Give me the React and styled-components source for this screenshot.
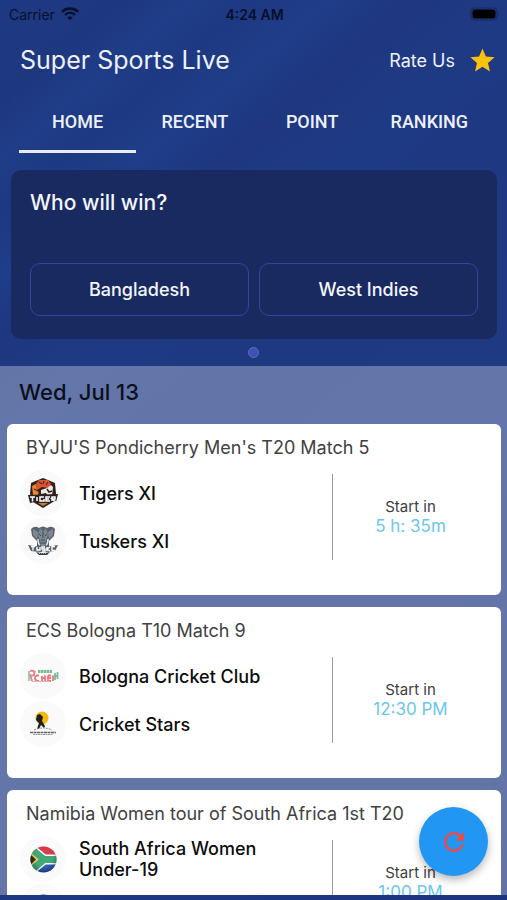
import React, { useState } from "react";
import styled, { createGlobalStyle, css } from "styled-components";

const GlobalStyle = createGlobalStyle`
  *, *::before, *::after { box-sizing: border-box; }
  html, body { margin: 0; padding: 0; }
  body, button { font-family: "Inter", "Liberation Sans", sans-serif; }
  h1, h2, h3, p, ul { margin: 0; padding: 0; font-weight: 400; }
`;

const Screen = styled.div`
  display: flex;
  flex-direction: column;
  height: 100vh;
  padding-bottom: 5px;
  overflow: hidden;
  background:
    linear-gradient(140deg,
      #1e3983 0%, #1e3880 8%, #1f3d88 12%, #1e3983 16%, #1f3d89 21%,
      #1e377f 26%, #1f3a84 33%, #1e3882 42%, #1f3983 60%, #1d3581 100%);
`;

const StatusBar = styled.div`
  display: grid;
  grid-template-columns: 1fr auto 1fr;
  align-items: center;
  height: 28px;
  padding: 0 7px 0 9px;
  color: #071028;
  font-size: 14px;
`;

const Carrier = styled.span`
  display: flex;
  align-items: center;
  gap: 6px;
`;

const Clock = styled.span`
  font-weight: 600;
`;

const BatterySlot = styled.span`
  display: flex;
  justify-content: flex-end;
`;

const AppBar = styled.header`
  display: flex;
  align-items: center;
  justify-content: space-between;
  height: 64px;
  padding: 0 10px 0 20px;
  color: #edf1fb;
`;

const AppTitle = styled.h1`
  font-size: 25px;
  line-height: 32px;
`;

const RateButton = styled.button`
  display: flex;
  align-items: center;
  gap: 13px;
  padding: 0;
  border: 0;
  background: none;
  color: inherit;
  font-size: 18px;
  cursor: pointer;
`;

const Tabs = styled.nav`
  display: grid;
  grid-template-columns: repeat(4, 1fr);
  margin: 0 19px;
`;

const Tab = styled.button`
  height: 61px;
  padding: 0;
  border: 0;
  border-bottom: 3px solid ${(p) => (p.$active ? "#e8ecf8" : "transparent")};
  background: none;
  color: #edf1fb;
  font-family: "Roboto", "Inter", sans-serif;
  font-size: 18px;
  font-weight: 500;
  cursor: pointer;
`;

const Poll = styled.section`
  margin: 17px 10px 0 11px;
  padding: 20px 19px 23px;
  border-radius: 10px;
  background: #192a61;
  color: #f4f6fd;
`;

const Question = styled.h2`
  font-size: 21px;
  font-weight: 500;
  line-height: 26px;
`;

const Options = styled.div`
  display: grid;
  grid-template-columns: 1fr 1fr;
  gap: 10px;
  margin-top: 47px;
`;

const Option = styled.button`
  height: 53px;
  padding: 0;
  border: 1px solid #3843a0;
  border-radius: 10px;
  background: ${(p) => (p.$chosen ? "#27387a" : "transparent")};
  color: inherit;
  font-size: 18px;
  font-weight: 500;
  cursor: pointer;
`;

const Pager = styled.div`
  display: flex;
  justify-content: center;
  align-items: center;
  height: 27px;
`;

const PagerDot = styled.span`
  width: 11px;
  height: 11px;
  border: 1px solid #5f6cba;
  border-radius: 50%;
  background: #3f51b5;
`;

const Schedule = styled.main`
  flex: 1;
  min-height: 0;
  overflow-y: auto;
  scrollbar-width: none;
  background: rgba(255, 255, 255, 0.31);
`;

const DateHeading = styled.h2`
  padding: 11px 19px 17px;
  color: #0b0f1c;
  font-size: 22px;
  font-weight: 500;
  line-height: 30px;
`;

const MatchList = styled.ul`
  display: flex;
  flex-direction: column;
  gap: 12px;
  padding: 0 6px 12px 7px;
  list-style: none;
`;

const MatchCard = styled.li`
  padding: 12px 13px 31px;
  border-radius: 6px;
  background: #ffffff;
`;

const MatchTitle = styled.h3`
  padding-left: 6px;
  color: #414141;
  font-size: 18px;
  line-height: 24px;
`;

const MatchBody = styled.div`
  display: grid;
  grid-template-columns: 2fr 1fr;
  align-items: center;
  margin-top: 10px;
`;

const Teams = styled.div`
  display: flex;
  flex-direction: column;
  gap: 2px;
`;

const Team = styled.div`
  display: flex;
  align-items: center;
  gap: 13px;
  height: 46px;
  padding-right: 20px;
  color: #0c0c0c;
  font-size: 18px;
  font-weight: 500;
  line-height: 21px;
`;

const LogoDisc = styled.span`
  display: flex;
  flex: none;
  align-items: center;
  justify-content: center;
  width: 46px;
  height: 46px;
  border-radius: 50%;
  background: #fafafa;
`;

const Start = styled.div`
  display: flex;
  flex-direction: column;
  align-items: center;
  justify-content: center;
  height: 86px;
  border-left: 1px solid #9c9c9c;
`;

const StartLabel = styled.p`
  color: #404040;
  font-size: 15px;
  line-height: 19px;
`;

const StartTime = styled.p`
  color: #6cc6ec;
  font-size: 17px;
  line-height: 21px;
`;

const RefreshButton = styled.button`
  position: fixed;
  right: 19px;
  bottom: 24px;
  display: flex;
  align-items: center;
  justify-content: center;
  width: 69px;
  height: 69px;
  padding: 0;
  border: 0;
  border-radius: 50%;
  background: #2196f3;
  color: #f04a45;
  box-shadow: 0 4px 9px rgba(0, 0, 0, 0.28);
  cursor: pointer;
`;

const glyph = css`
  display: block;
  flex: none;
`;

const Svg = styled.svg`
  ${glyph}
`;

function WifiIcon() {
  return (
    <Svg width="18" height="14" viewBox="0 0 18 14" fill="none" stroke="currentColor" aria-hidden="true">
      <path d="M1 4.7C5.5.5 12.5.5 17 4.7" strokeWidth="2.6" />
      <path d="M4 8C6.9 5.2 11.1 5.2 14 8" strokeWidth="2.4" />
      <path d="M9 13.3 6.2 10.5Q9 8.300 11.800 10.500Z" fill="currentColor" stroke="none" />
    </Svg>
  );
}

function BatteryIcon() {
  return (
    <Svg width="30" height="14" viewBox="0 0 30 14" aria-hidden="true">
      <rect x="1" y="1" width="26" height="12" rx="4" fill="none" stroke="#152a63" strokeWidth="1.2" />
      <rect x="2.5" y="2.500" width="23" height="9" rx="2.500" fill="#000" />
      <path d="M28.3 5Q30 7 28.3 9Z" fill="#152a63" />
    </Svg>
  );
}

function StarIcon() {
  return (
    <Svg width="29" height="29" viewBox="0 0 24 24" fill="#fdc20a" aria-hidden="true">
      <path d="M12 17.27 18.18 21l-1.64-7.03L22 9.24l-7.19-.61L12 2 9.19 8.63 2 9.24l5.46 4.73L5.82 21z" />
    </Svg>
  );
}

function RefreshIcon() {
  return (
    <Svg width="30" height="30" viewBox="0 0 24 24" fill="currentColor" aria-hidden="true">
      <path d="M17.65 6.35C16.2 4.9 14.21 4 12 4c-4.42 0-7.99 3.58-7.99 8s3.57 8 7.99 8c3.73 0 6.84-2.55 7.73-6h-2.08c-.82 2.33-3.04 4-5.65 4-3.31 0-6-2.69-6-6s2.69-6 6-6c1.66 0 3.14.69 4.22 1.78L13 11h7V4l-2.35 2.35z" />
    </Svg>
  );
}

function TigersLogo() {
  return (
    <Svg width="32" height="32" viewBox="0 0 32 32" aria-hidden="true">
      <path d="M16 1 21 3 28 6 29 17 26 25 16 31 6 25 3 17 4 6 11 3Z" fill="#30211f" />
      <path d="M9 7 12 3 21 3 24 7 21 11 15 10 10 13Z" fill="#dc5530" />
      <path d="M5 9 9 7 10 13 13 18H6Z" fill="#e9862c" />
      <path d="M12 5 15 7M17 4 16 7M21 5 19 8M7 12 11 14" stroke="#5b2820" strokeWidth="1.2" />
      <path d="M14 13 20 11 24 8 26 10 25 19H21L19 16 14 17Z" fill="#efe9e5" />
      <path d="M20 12 22 15 25 14M11 17 15 18" stroke="#33201e" strokeWidth="1.5" fill="none" />
      <path d="M1 18 31 17 29 25Q16 22 3 26Z" fill="#292323" />
      <path d="M3 20h5M5.500 20v4.500M10 20v4M17 20h-4v4h4v-2M23 20h-4v4h4M19 22h3M25 24v-4h3v2h-3l4 3" fill="none" stroke="#fff" strokeWidth="1.5" />
      <path d="M11 26h10l-5 3Z" fill="#bc852e" />
    </Svg>
  );
}

function TuskersLogo() {
  return (
    <Svg width="32" height="32" viewBox="0 0 32 32" aria-hidden="true">
      <path d="M12 3Q16 0 20 3Q25 0 28 4L27 11 22 16 22 22H10V16L5 11 4 4Q8 0 12 3Z" fill="#59646e" />
      <path d="M6 4 11 7 10 14 6 10ZM26 4 21 7 22 14 26 10Z" fill="#7d8893" />
      <path d="M13 3 16 7 19 3 21 10 18 18 18 23H14V18L11 10Z" fill="#7b8894" />
      <path d="M16 7V13M12 9 14 11M20 9 18 11M14 15h4M14 18h4" stroke="#3c4751" strokeWidth="1" />
      <path d="M11 14Q11 19 13 20M21 14Q21 19 19 20" stroke="#e6eaed" strokeWidth="1.5" fill="none" />
      <path d="M1 20Q16 23 31 20L28 26Q16 28 4 26Z" fill="#59626a" />
      <path d="M4 21.500h4M6 22v3.500M10 22v3h3v-3M18 22h-3v2h3v2h-3M20 22v4M23 22l-3 2 3 2M28 21.500h-3v4h3" fill="none" stroke="#fff" strokeWidth="1.4" />
      <path d="M9 27Q16 29 23 27L20 30H12Z" fill="#343b42" />
      <path d="M12 28.500h8" stroke="#a7adb2" strokeDasharray="1 1" />
    </Svg>
  );
}

function BolognaLogo() {
  return (
    <Svg width="32" height="16" viewBox="0 0 32 16" fill="none" aria-hidden="true">
      <path d="M11 3.500h14" stroke="#74bd95" strokeWidth="3" strokeDasharray="2.500 .5" />
      <path d="M2 3v10" stroke="#7fc29b" strokeWidth="1.500" />
      <path d="M3 3Q9 2 7 7L4 8M3 6l2 7M7 5 8 3" stroke="#ea868d" strokeWidth="2" />
      <path d="M12 7.500Q8 7 8 10T12 13M15 8v5M15 10h3M18 7.500v5.500M21 7.500v5.500M24 7.500h-3M21 10h3M24 13h-3M26 7.500v5.500" stroke="#e97880" strokeWidth="1.800" />
      <path d="M28 5v7M30.500 4v7M27 8h4" stroke="#79bd95" strokeWidth="1.800" />
      <path d="M5 13.500h18" stroke="#f2b2b5" />
    </Svg>
  );
}

function CricketStarsLogo() {
  return (
    <Svg width="30" height="30" viewBox="0 0 30 30" aria-hidden="true">
      <circle cx="14" cy="9" r="6.500" fill="#f7b90d" />
      <path d="M9 6 12 5 15 8 14 12 17 17 16 19 13 16 11 20 9 20 11 14 8 11Z" fill="#1e211d" />
      <path d="M6 21Q15 17 24 21" fill="none" stroke="#888" strokeDasharray="2 1" />
      <path d="M2 23.500h26" stroke="#666" strokeWidth="1.500" strokeDasharray="3 .5" />
      <path d="M5 25.500h20" stroke="#999" strokeDasharray="2 .5" />
    </Svg>
  );
}

function SouthAfricaFlag() {
  return (
    <Svg width="27" height="27" viewBox="0 0 27 27" aria-hidden="true">
      <defs>
        <clipPath id="flag-za">
          <circle cx="13.5" cy="13.5" r="13" />
        </clipPath>
        <radialGradient id="flag-za-gloss" cx=".5" cy=".4" r=".6">
          <stop offset=".5" stopColor="#fff" stopOpacity=".12" />
          <stop offset="1" stopColor="#000" stopOpacity=".3" />
        </radialGradient>
      </defs>
      <g clipPath="url(#flag-za)">
        <path d="M0 0h27v14H0z" fill="#d42033" />
        <path d="M0 14h27v13H0z" fill="#164bad" />
        <path d="M0 2 14 13.500H27M0 25 14 13.500" stroke="#fff" strokeWidth="10" fill="none" />
        <path d="M0 2 14 13.500H27M0 25 14 13.500" stroke="#279d65" strokeWidth="7" fill="none" />
        <path d="M0 6 8.500 13.500 0 21Z" fill="#efbd2a" />
        <path d="M0 8 6 13.500 0 19Z" fill="#111" />
        <circle cx="13.5" cy="13.5" r="13" fill="url(#flag-za-gloss)" />
      </g>
    </Svg>
  );
}

function NamibiaFlag() {
  return (
    <Svg width="27" height="27" viewBox="0 0 27 27" aria-hidden="true">
      <defs>
        <clipPath id="flag-na">
          <circle cx="13.5" cy="13.5" r="13" />
        </clipPath>
      </defs>
      <g clipPath="url(#flag-na)">
        <path d="M0 0h27L0 27z" fill="#1b3b7c" />
        <path d="M27 0v27H0z" fill="#16803f" />
        <path d="M-2 29 29-2" stroke="#fff" strokeWidth="9" />
        <path d="M-2 29 29-2" stroke="#cc2239" strokeWidth="6" />
        <circle cx="8" cy="8" r="3" fill="#ffce2e" />
      </g>
    </Svg>
  );
}

const tabs = ["HOME", "RECENT", "POINT", "RANKING"];
const options = ["Bangladesh", "West Indies"];

const matches = [
  {
    title: "BYJU'S Pondicherry Men's T20 Match 5",
    start: "5 h: 35m",
    teams: [
      { name: "Tigers XI", Logo: TigersLogo },
      { name: "Tuskers XI", Logo: TuskersLogo },
    ],
  },
  {
    title: "ECS Bologna T10 Match 9",
    start: "12:30 PM",
    teams: [
      { name: "Bologna Cricket Club", Logo: BolognaLogo },
      { name: "Cricket Stars", Logo: CricketStarsLogo },
    ],
  },
  {
    title: "Namibia Women tour of South Africa 1st T20",
    start: "1:00 PM",
    teams: [
      { name: "South Africa Women Under-19", Logo: SouthAfricaFlag },
      { name: "Namibia", Logo: NamibiaFlag },
    ],
  },
];

function Match({ match }) {
  return (
    <MatchCard>
      <MatchTitle>{match.title}</MatchTitle>
      <MatchBody>
        <Teams>
          {match.teams.map(({ name, Logo }) => (
            <Team key={name}>
              <LogoDisc>
                <Logo />
              </LogoDisc>
              <span>{name}</span>
            </Team>
          ))}
        </Teams>
        <Start>
          <StartLabel>Start in</StartLabel>
          <StartTime>{match.start}</StartTime>
        </Start>
      </MatchBody>
    </MatchCard>
  );
}

export default function App() {
  const [activeTab, setActiveTab] = useState("HOME");
  const [vote, setVote] = useState(null);

  return (
    <>
      <GlobalStyle />
      <Screen>
        <StatusBar>
          <Carrier>
            Carrier
            <WifiIcon />
          </Carrier>
          <Clock>4:24 AM</Clock>
          <BatterySlot>
            <BatteryIcon />
          </BatterySlot>
        </StatusBar>
        <AppBar>
          <AppTitle>Super Sports Live</AppTitle>
          <RateButton type="button">
            Rate Us
            <StarIcon />
          </RateButton>
        </AppBar>
        <Tabs>
          {tabs.map((tab) => (
            <Tab key={tab} type="button" $active={tab === activeTab} onClick={() => setActiveTab(tab)}>
              {tab}
            </Tab>
          ))}
        </Tabs>
        <Poll>
          <Question>Who will win?</Question>
          <Options>
            {options.map((option) => (
              <Option key={option} type="button" $chosen={option === vote} onClick={() => setVote(option)}>
                {option}
              </Option>
            ))}
          </Options>
        </Poll>
        <Pager>
          <PagerDot />
        </Pager>
        <Schedule>
          <DateHeading>Wed, Jul 13</DateHeading>
          <MatchList>
            {matches.map((match) => (
              <Match key={match.title} match={match} />
            ))}
          </MatchList>
        </Schedule>
        <RefreshButton type="button" aria-label="Refresh">
          <RefreshIcon />
        </RefreshButton>
      </Screen>
    </>
  );
}
